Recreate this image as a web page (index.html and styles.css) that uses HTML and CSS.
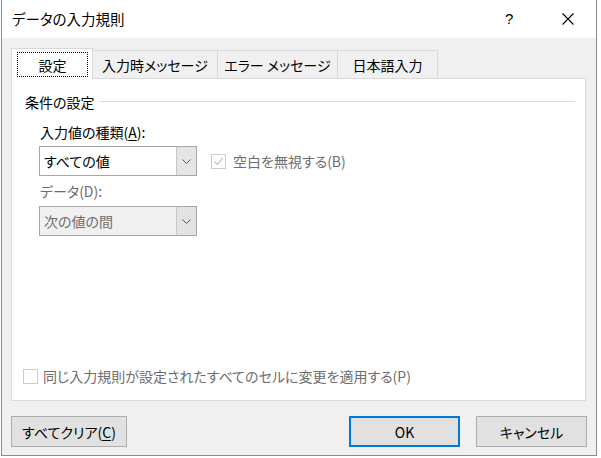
FILE: index.html
```html
<!doctype html>
<html>
  <head>
    <meta charset="utf-8">
    <title>データの入力規則</title>
    <link rel="stylesheet" href="styles.css">
  </head>
  <body>
    <div class="win">
      <div class="titlebar">
        <span class="title">データの入力規則</span>
        <span class="help">?</span>
        <span class="close">
          <svg width="12" height="12" viewBox="0 0 12 12"><path d="M0.5 0.5L11.5 11.5M11.5 0.5L0.5 11.5" stroke="#000" stroke-width="1.1"/></svg>
        </span>
      </div>
      <div class="body">
        <div class="tabs">
          <div class="tab sel"><span class="focus">設定</span></div>
          <div class="tab t2">入力時メッセージ</div>
          <div class="tab t3">エラー メッセージ</div>
          <div class="tab t4">日本語入力</div>
        </div>
        <div class="panel">
          <div class="legend"><span>条件の設定</span><i></i></div>
          <div class="group">
            <div class="lbl">入力値の種類(<u>A</u>):</div>
            <div class="row">
              <div class="combo">
                <span class="val">すべての値</span>
                <span class="drop"><svg width="9" height="5" viewBox="0 0 9 5"><path d="M0.5 0.5L4.5 4.5L8.5 0.5" fill="none" stroke="#555" stroke-width="1"/></svg></span>
              </div>
              <label class="chk off"><span class="box"><svg width="13" height="13" viewBox="0 0 13 13"><path d="M2.5 6.5L5.2 9.3L10.8 3" fill="none" stroke="#c4c4c4" stroke-width="1.2"/></svg></span>空白を無視する(B)</label>
            </div>
            <div class="lbl off lbl2">データ(D):</div>
            <div class="combo dis">
              <span class="val">次の値の間</span>
              <span class="drop"><svg width="9" height="5" viewBox="0 0 9 5"><path d="M0.5 0.5L4.5 4.5L8.5 0.5" fill="none" stroke="#555" stroke-width="1"/></svg></span>
            </div>
          </div>
          <label class="chk off apply"><span class="box"></span>同じ入力規則が設定されたすべてのセルに変更を適用する(P)</label>
        </div>
        <div class="buttons">
          <button class="btn clear">すべてクリア(<u>C</u>)</button>
          <span class="spacer"></span>
          <button class="btn ok">OK</button>
          <button class="btn cancel">キャンセル</button>
        </div>
      </div>
    </div>
  </body>
</html>
```

FILE: styles.css
```css
html, body { margin: 0; padding: 0; }
body {
  background: #fff;
  font-family: "Noto Sans CJK JP", "Noto Sans", sans-serif;
  font-size: 14px;
  font-feature-settings: "palt";
  color: #000;
}
.win {
  width: 594px; height: 455px;
  margin-left: 1px;
  border: 1px solid #8c8c8c; border-top: 0;
  display: flex; flex-direction: column;
}
.titlebar {
  height: 38px; background: #fff;
  display: flex; align-items: center;
  padding-left: 10px;
}
.title { flex: 1; font-size: 14.5px; line-height: 20px; margin-top: -1px; }
.help { width: 8px; margin-right: 49px; font-family: "Liberation Sans", sans-serif; font-size: 15px; margin-top: -1px; }
.close { width: 12px; height: 12px; margin-right: 22px; margin-top: -1px; display: flex; }
.body {
  flex: 1; background: #f0f0f0;
  padding: 10px 9px 0 9px;
  display: flex; flex-direction: column;
}
.tabs { display: flex; align-items: flex-end; height: 30px; }
.tab {
  height: 28px; box-sizing: border-box;
  border: 1px solid #d9d9d9; border-bottom: 0;
  display: flex; align-items: center; justify-content: center;
  line-height: 18px; padding-top: 1px;
  margin-left: -1px;
}
.tab.sel {
  height: 31px; width: 82px; margin-left: 0;
  background: #fff; position: relative; z-index: 1;
  margin-bottom: -1px; padding: 3px 4px 2px 4px; align-items: stretch;
}
.focus {
  flex: 1; border: 1px dotted #000;
  display: flex; align-items: center; justify-content: center;
  margin-left: 1px;
}
.t2 { width: 126px; }
.t3 { width: 121px; }
.t4 { width: 101px; }
.panel {
  width: 575px; height: 323px; box-sizing: border-box;
  border: 1px solid #d9d9d9; background: #fff;
  padding: 14px 10px 15px 13px;
  display: flex; flex-direction: column;
}
.legend { display: flex; align-items: center; line-height: 18px; }
.legend i { flex: 1; height: 1px; background: #dadada; margin-left: 5px; margin-top: -2px; }
.group { padding-left: 14px; }
.lbl { line-height: 18px; margin-top: 12px; padding-left: 1px; }
.lbl2 { margin-top: 6px; }
.off { color: #6d6d6d; }
.row { display: flex; align-items: center; margin-top: 5px; }
.combo {
  width: 158px; height: 30px; box-sizing: border-box;
  border: 1px solid #a6a6a6; background: #fff;
  display: flex; align-items: stretch;
}
.combo .val { flex: 1; line-height: 28px; padding-left: 4px; }
.combo .drop {
  width: 19px; background: #e5e5e5; border-left: 1px solid #c8c8c8;
  display: flex; align-items: center; justify-content: center;
}
.combo.dis { background: #f0f0f0; color: #6d6d6d; margin-top: 6px; }
.combo.dis .drop { background: #e3e3e3; }
.chk { display: flex; align-items: center; line-height: 18px; }
.row .chk { margin-left: 14px; }
.box {
  width: 13px; height: 13px; border: 1px solid #cccccc; background: #fff;
  display: flex; margin-right: 7px;
}
.apply { margin-top: auto; margin-left: -2px; }
.apply .box { margin-right: 5px; }
.buttons { display: flex; margin-top: 15px; }
.spacer { flex: 1; }
.btn {
  height: 31px; box-sizing: border-box;
  font-family: inherit; font-size: 14px; font-feature-settings: "palt";
  background: #e1e1e1; border: 1px solid #adadad;
  padding: 0; color: #000;
}
.clear { width: 116px; }
.ok { width: 111px; border: 2px solid #0078d7; }
.cancel { width: 111px; margin-left: 16px; }
u { text-underline-offset: 2px; }
```
